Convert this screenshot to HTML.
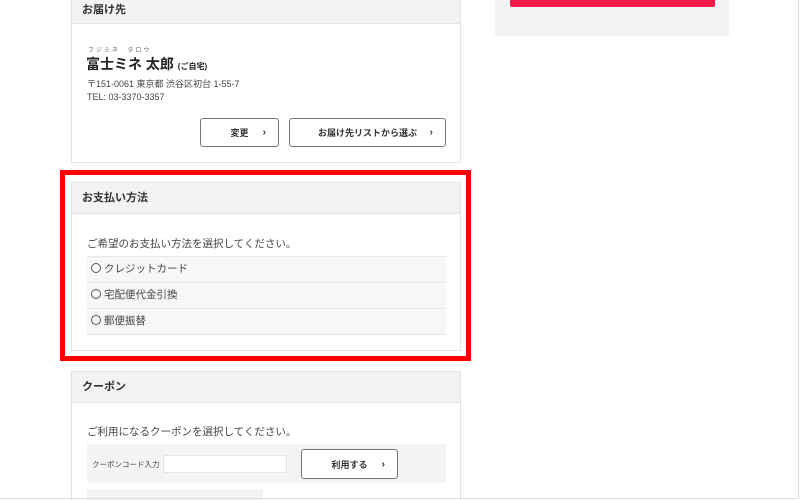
<!DOCTYPE html>
<html><head><meta charset="utf-8"><style>
*{box-sizing:border-box;margin:0;padding:0}
html{width:800px;height:500px;overflow:hidden}
body{width:800px;height:500px;overflow:hidden;background:#fff;font-family:"Liberation Sans","Noto Sans CJK JP",sans-serif;color:#333;position:relative}
.frame{position:absolute;left:0;top:0;width:799px;height:499px;border-right:1px solid #ddd;border-bottom:1px solid #ddd;z-index:5}
.abs{position:absolute}
.card{position:absolute;left:71px;width:390px;border:1px solid #e3e4e6;background:#fff}
.hd{background:#f2f3f5;border-bottom:1px solid #e3e4e6;font-size:11px;font-weight:bold;padding-left:10px;color:#333}
.btn{position:absolute;border:1px solid #777;border-radius:3px;background:#fff;font-size:9px;font-weight:bold;color:#333;display:flex;align-items:center;justify-content:center}
.btn span.ar{position:absolute;right:12px;font-size:10px}
.row{position:absolute;left:15px;width:359px;height:26px;background:#f6f7f9;border-top:1px solid #e6e7e9;font-size:10.5px;line-height:25px;padding-left:4px;color:#444}
.rad{display:inline-block;width:10px;height:10px;border:1px solid #555;border-radius:50%;vertical-align:-1px;margin-right:3px}
</style></head><body>
<div class="frame"></div>
<div class="abs" style="left:495px;top:0;width:234px;height:36px;background:#f2f3f5"></div>
<div class="abs" style="left:510px;top:0;width:205px;height:7px;background:#f5194a;border-radius:0 0 2px 2px"></div>

<div class="card" style="top:-8px;height:171px">
  <div class="hd" style="height:31px;line-height:30px;padding-top:2px">お届け先</div>
  <div class="abs" style="left:16px;top:52px;font-size:6px;letter-spacing:2px;color:#666">フジミネ&nbsp;&nbsp;タロウ</div>
  <div class="abs" style="left:14px;top:61px;font-size:14px;font-weight:bold;color:#222">富士ミネ 太郎 <span style="font-size:8px">(ご自宅)</span></div>
  <div class="abs" style="left:15px;top:85px;font-size:9px;color:#444;line-height:13px">〒151-0061 東京都 渋谷区初台 1-55-7<br>TEL: 03-3370-3357</div>
  <div class="btn" style="left:128px;top:125px;width:79px;height:29px">変更<span class="ar">›</span></div>
  <div class="btn" style="left:217px;top:125px;width:157px;height:29px">お届け先リストから選ぶ<span class="ar">›</span></div>
</div>

<div class="abs" style="left:60px;top:170px;width:411px;height:191px;border:5px solid #f00"></div>
<div class="card" style="top:182px;height:169px">
  <div class="hd" style="height:31px;line-height:30px">お支払い方法</div>
  <div class="abs" style="left:15px;top:53px;font-size:10.5px;color:#444">ご希望のお支払い方法を選択してください。</div>
  <div class="row" style="top:73px"><span class="rad"></span>クレジットカード</div>
  <div class="row" style="top:99px"><span class="rad"></span>宅配便代金引換</div>
  <div class="row" style="top:125px;border-bottom:1px solid #e6e7e9;height:27px"><span class="rad"></span>郵便振替</div>
</div>

<div class="card" style="top:371px;height:129px;border-bottom:none">
  <div class="hd" style="height:31px;line-height:30px">クーポン</div>
  <div class="abs" style="left:15px;top:52px;font-size:10.5px;color:#444">ご利用になるクーポンを選択してください。</div>
  <div class="abs" style="left:15px;top:72px;width:359px;height:39px;background:#f4f4f6"></div>
  <div class="abs" style="left:20px;top:87px;font-size:7.5px;color:#444">クーポンコード入力</div>
  <div class="abs" style="left:91px;top:83px;width:124px;height:18px;background:#fff;border:1px solid #e4e4e4"></div>
  <div class="btn" style="left:229px;top:77px;width:97px;height:30px">利用する<span class="ar">›</span></div>
  <div class="abs" style="left:15px;top:117px;width:176px;height:12px;background:#f4f4f6"></div>
</div>
</body></html>
